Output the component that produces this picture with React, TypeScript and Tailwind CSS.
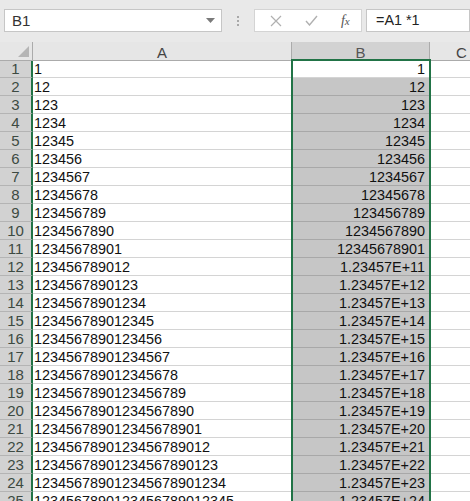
import React from "react";

const digits = "1234567890123456789012345";

function bValue(n: number): string {
  if (n <= 11) return digits.slice(0, n);
  return `1.23457E+${n - 1}`;
}

const rows = Array.from({ length: 25 }, (_, i) => i + 1);

export default function App() {
  return (
    <div
      className="w-[470px] h-[501px] overflow-hidden bg-white relative"
      style={{ fontFamily: '"Liberation Sans", Arial, sans-serif' }}
    >
      {/* Formula bar */}
      <div className="h-[42px] bg-[#e9e9e9] flex items-start pt-[9px]">
        <div className="ml-[4px] w-[218px] h-[23px] bg-white border border-[#c6c6c6] flex items-center justify-between pl-[7px] pr-[6px]">
          <span className="text-[15px] text-[#333] leading-none">B1</span>
          <svg width="9" height="5" viewBox="0 0 9 5">
            <path d="M0 0 L9 0 L4.5 5 Z" fill="#7a7a7a" />
          </svg>
        </div>
        <div className="w-[32px] h-[23px] flex flex-col items-center justify-center gap-[2px]">
          <span className="w-[2px] h-[2px] bg-[#a8a8a8]" />
          <span className="w-[2px] h-[2px] bg-[#a8a8a8]" />
          <span className="w-[2px] h-[2px] bg-[#a8a8a8]" />
        </div>
        <div className="w-[108px] h-[23px] bg-white border border-[#d4d4d4] flex items-center">
          <div className="w-[36px] flex justify-center pl-[6px]">
            <svg width="12" height="12" viewBox="0 0 12 12">
              <path d="M1 1 L11 11 M11 1 L1 11" stroke="#b0b0b0" strokeWidth="1.2" />
            </svg>
          </div>
          <div className="w-[36px] flex justify-center pl-[6px]">
            <svg width="13" height="11" viewBox="0 0 13 11">
              <path d="M1 6 L4.5 10 L12 1" stroke="#b0b0b0" strokeWidth="1.4" fill="none" />
            </svg>
          </div>
          <div className="w-[36px] flex justify-center pl-[4px]">
            <span
              className="italic text-[14px] text-[#555] leading-none"
              style={{ fontFamily: '"Liberation Serif", "Times New Roman", serif' }}
            >
              f<span className="text-[11px]">x</span>
            </span>
          </div>
        </div>
        <div className="ml-[4px] flex-1 h-[23px] bg-white border border-[#c6c6c6] flex items-center pl-[9px]">
          <span className="text-[14.4px] text-[#222] leading-none">=A1 *1</span>
        </div>
      </div>

      {/* Grid */}
      <div className="grid grid-cols-[33px_259px_138px_64px] auto-rows-[18px] text-[14.4px] leading-none">
        {/* header row */}
        <div className="h-[19px] bg-[#e6e6e6] border-r border-b border-[#ababab] relative">
          <svg className="absolute right-[3px] bottom-[3px]" width="11" height="11" viewBox="0 0 11 11">
            <path d="M11 0 L11 11 L0 11 Z" fill="#b5b5b5" />
          </svg>
        </div>
        <div className="h-[19px] bg-[#e6e6e6] border-r border-b border-[#ababab] flex items-center justify-center text-[#444] text-[15px] pt-[2px]">
          A
        </div>
        <div className="h-[19px] bg-[#d2d2d2] border-r border-b border-[#ababab] flex items-center justify-center text-[#555] text-[15px] pt-[2px]">
          B
        </div>
        <div className="h-[19px] bg-[#e6e6e6] border-r border-b border-[#ababab] flex items-center justify-center text-[#444] text-[15px] pt-[2px]">
          C
        </div>

        {rows.map((n) => (
          <React.Fragment key={n}>
            <div className="bg-[#d2d2d2] border-b border-[#b4b4b4] border-r-2 border-r-[#217346] flex items-end justify-center text-[#3d4a42] text-[15px] pb-[1px]">
              {n}
            </div>
            <div className="border-r border-b border-[#d4d4d4] flex items-end pl-[1px] pb-[1px] whitespace-nowrap overflow-hidden text-[#111]">
              {digits.slice(0, n)}
            </div>
            <div
              className={`border-r border-b flex items-end justify-end pr-[4px] pb-[1px] whitespace-nowrap text-[#111] ${
                n === 1 ? "bg-white border-[#d4d4d4]" : "bg-[#c6c6c6] border-[#a8a8a8]"
              }`}
            >
              {bValue(n)}
            </div>
            <div className="border-r border-b border-[#d4d4d4]" />
          </React.Fragment>
        ))}
      </div>

      {/* selection outline */}
      <div className="absolute left-[291px] top-[59px] w-[140px] h-[460px] border-2 border-[#217346] pointer-events-none" />
    </div>
  );
}
